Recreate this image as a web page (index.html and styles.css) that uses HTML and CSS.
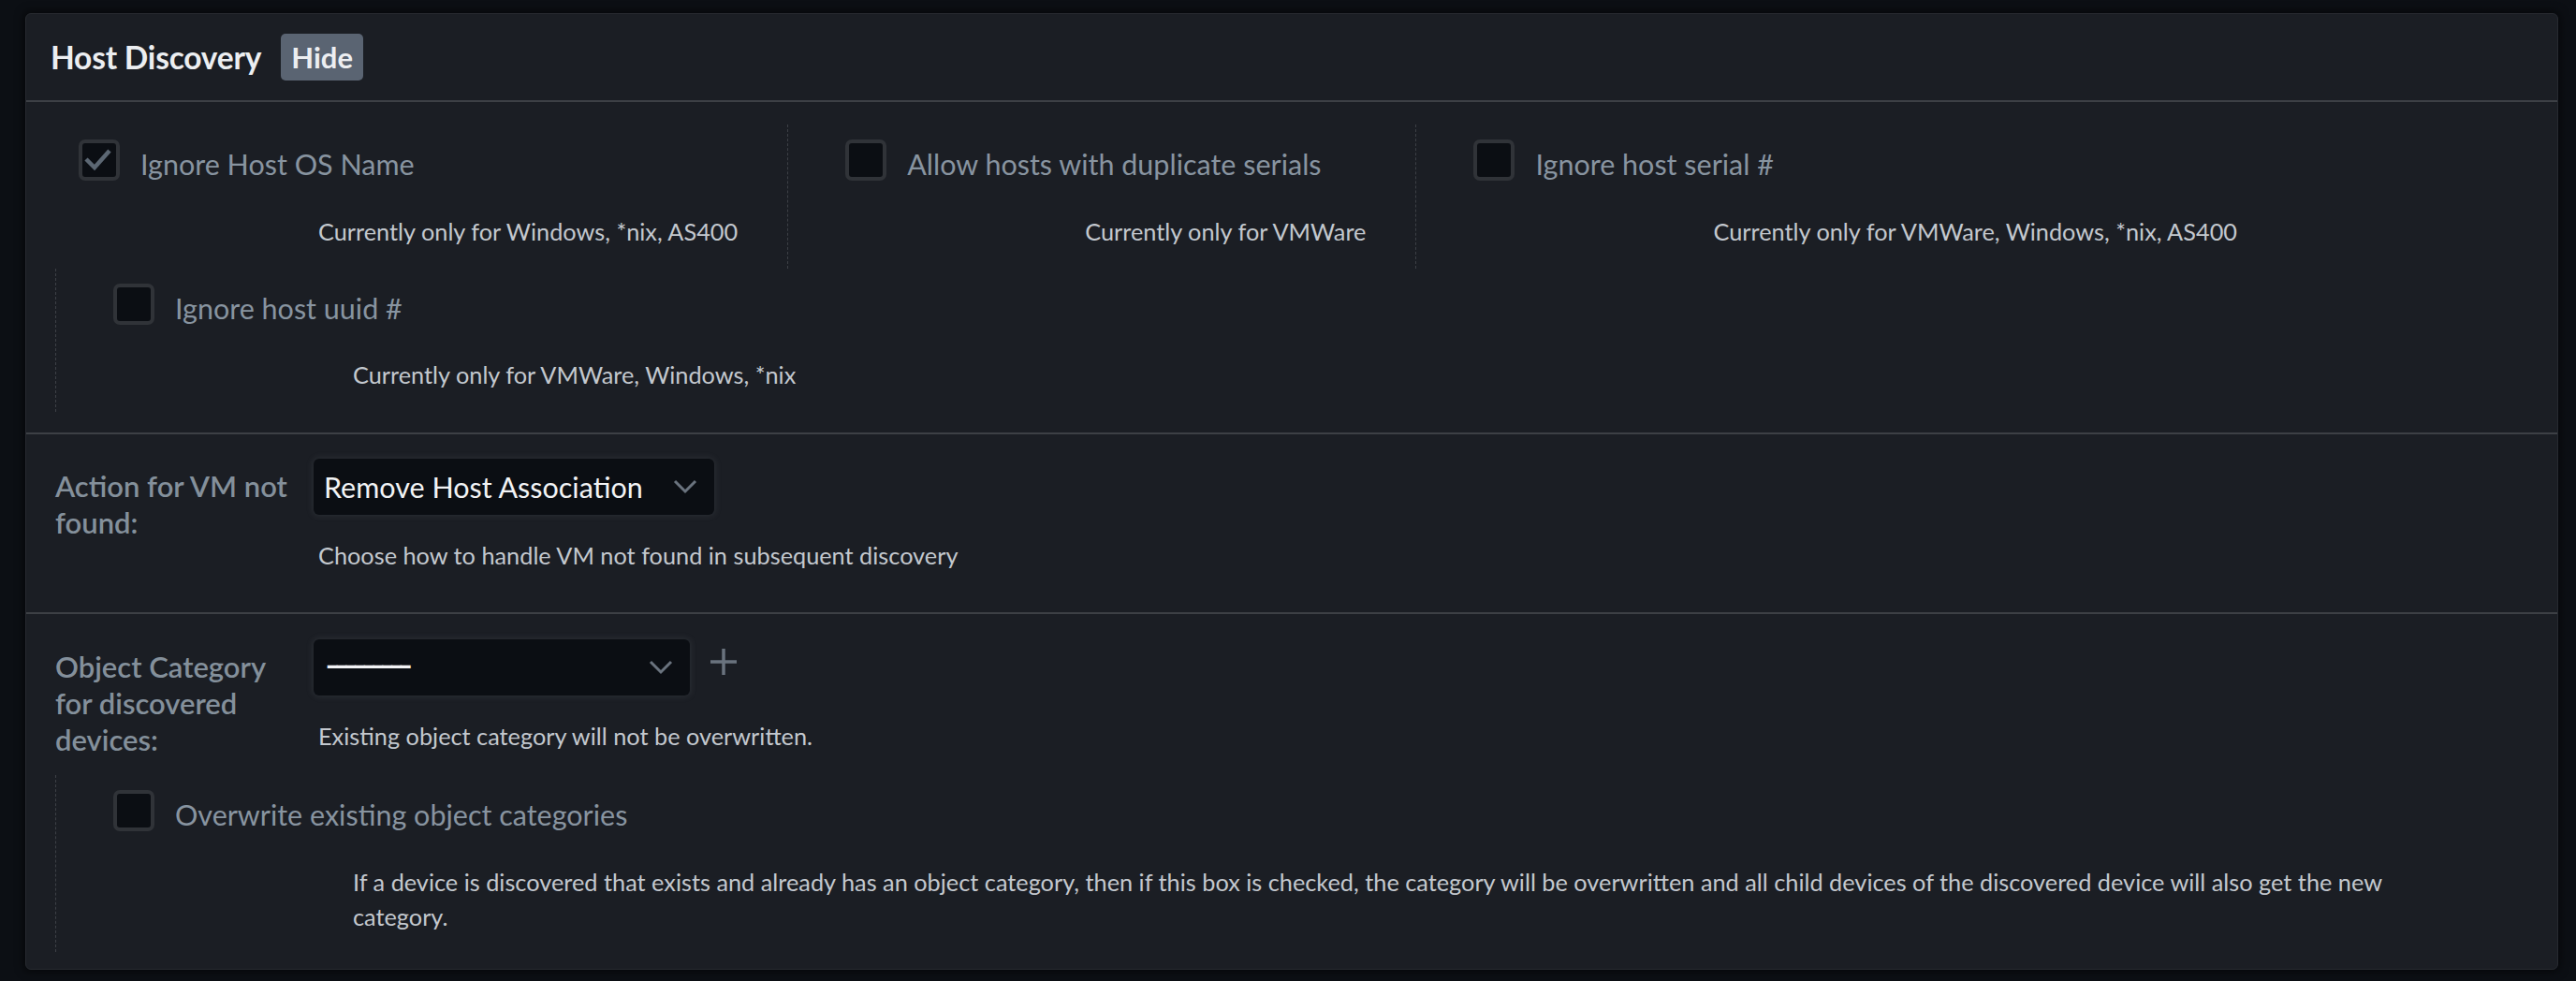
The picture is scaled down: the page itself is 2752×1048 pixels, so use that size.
FILE: index.html
```html
<!DOCTYPE html>
<html lang="en">
<head>
<meta charset="utf-8">
<title>Host Discovery</title>
<link rel="stylesheet" href="styles.css">
</head>
<body>
<div class="card">
  <div class="card-header">
    <h2 class="title">Host Discovery</h2>
    <span class="badge">Hide</span>
  </div>

  <div class="section section-checks">
    <div class="check-item first">
      <div class="check-row">
        <span class="checkbox checked">
          <svg viewBox="0 0 44 44" width="44" height="44"><polyline points="8,21 17,30 33,12" fill="none" stroke="#5c6773" stroke-width="4.5" stroke-linecap="butt" stroke-linejoin="miter"/></svg>
        </span>
        <span class="check-label">Ignore Host OS Name</span>
      </div>
      <div class="help">Currently only for Windows, *nix, AS400</div>
    </div>
    <div class="check-item">
      <div class="check-row">
        <span class="checkbox"></span>
        <span class="check-label">Allow hosts with duplicate serials</span>
      </div>
      <div class="help">Currently only for VMWare</div>
    </div>
    <div class="check-item">
      <div class="check-row">
        <span class="checkbox"></span>
        <span class="check-label">Ignore host serial #</span>
      </div>
      <div class="help">Currently only for VMWare, Windows, *nix, AS400</div>
    </div>
    <div class="check-item">
      <div class="check-row">
        <span class="checkbox"></span>
        <span class="check-label">Ignore host uuid #</span>
      </div>
      <div class="help">Currently only for VMWare, Windows, *nix</div>
    </div>
  </div>

  <div class="section section-action">
    <div class="form-row">
      <label class="form-label">Action for VM not found:</label>
      <div class="field">
        <div class="select select-action">
          <span class="select-text">Remove Host Association</span>
          <svg class="chevron" viewBox="0 0 26 16" width="26" height="16"><polyline points="2,2 13,13 24,2" fill="none" stroke="#6a737e" stroke-width="3"/></svg>
        </div>
        <div class="field-help">Choose how to handle VM not found in subsequent discovery</div>
      </div>
    </div>
  </div>

  <div class="section section-category">
    <div class="form-row">
      <label class="form-label">Object Category for discovered devices:</label>
      <div class="field">
        <div class="select-line">
          <div class="select select-category">
            <span class="select-text dashes">---------</span>
            <svg class="chevron" viewBox="0 0 26 16" width="26" height="16"><polyline points="2,2 13,13 24,2" fill="none" stroke="#6a737e" stroke-width="3"/></svg>
          </div>
          <svg class="plus" viewBox="0 0 30 30" width="30" height="30"><path d="M15 1 V29 M1 15 H29" fill="none" stroke="#6a737e" stroke-width="3.5"/></svg>
        </div>
        <div class="field-help">Existing object category will not be overwritten.</div>
      </div>
    </div>
    <div class="check-item wide">
      <div class="check-row">
        <span class="checkbox"></span>
        <span class="check-label">Overwrite existing object categories</span>
      </div>
      <div class="help">If a device is discovered that exists and already has an object category, then if this box is checked, the category will be overwritten and all child devices of the discovered device will also get the new category.</div>
    </div>
  </div>
</div>
</body>
</html>
```
FILE: styles.css
```css
* { box-sizing: border-box; }

html, body {
  margin: 0;
  padding: 0;
  background: #0c0f14;
}

body {
  padding: 14px 19px 13px 27px;
  font-family: Lato, "Open Sans", sans-serif;
}

.card {
  background: #1b1e24;
  border: 1px solid #272a30;
  border-radius: 6px;
  box-shadow: 0 0 10px 2px rgba(0, 0, 0, 0.55);
  overflow: hidden;
}

.card-header {
  height: 94px;
  display: flex;
  align-items: center;
  gap: 21px;
  padding: 0 26px;
  border-bottom: 2px solid #3d4045;
}

.title {
  margin: 0;
  font-family: Lato, sans-serif;
  font-weight: 700;
  font-size: 33.5px;
  color: #eceef1;
  letter-spacing: -0.2px;
}

.badge {
  height: 50px;
  padding: 0 11px;
  display: inline-flex;
  align-items: center;
  background: #5a6472;
  border-radius: 5px;
  color: #eceef1;
  font-weight: 700;
  font-size: 31px;
}

.section {
  border-bottom: 2px solid #3d4045;
}

.section:last-child {
  border-bottom: none;
}

.section-checks {
  display: flex;
  flex-wrap: wrap;
  padding: 24px 0 22px 31px;
}

.check-item {
  border-left: 1px dashed #3d4046;
  padding: 16px 53px 21px 61px;
}

.check-item.first {
  border-left: none;
  padding-left: 25px;
}

.check-row {
  display: flex;
  align-items: flex-start;
  gap: 22px;
}

.checkbox {
  flex: 0 0 44px;
  width: 44px;
  height: 44px;
  border: 4px solid #303338;
  border-radius: 7px;
  background: #0b0e13;
  position: relative;
}

.checkbox svg {
  position: absolute;
  left: -4px;
  top: -4px;
}

.check-label {
  padding-top: 8px;
  font-size: 30.5px;
  line-height: 1.2;
  color: #8894a0;
  white-space: nowrap;
}

.help {
  margin-top: 35px;
  margin-left: 256px;
  font-size: 25.3px;
  line-height: 37px;
  color: #c3c8ce;
  white-space: nowrap;
}

.check-item.wide {
  margin-left: 31px;
  padding-bottom: 19px;
}

.check-item.wide .help {
  white-space: normal;
  max-width: 2265px;
}

.form-row {
  display: flex;
  align-items: flex-start;
  padding-left: 31px;
}

.form-label {
  flex: 0 0 262px;
  margin-right: 14px;
  padding-top: 10px;
  font-weight: 600;
  font-size: 31px;
  line-height: 39px;
  color: #84909b;
}

.section-action {
  padding: 26px 0 42px;
}

.section-category {
  padding: 27px 0 18px;
}

.section-category .form-row {
  margin-bottom: 18px;
}

.select {
  height: 60px;
  display: flex;
  align-items: center;
  justify-content: space-between;
  padding: 0 18px 0 11px;
  background: #0b0e13;
  border-radius: 6px;
  box-shadow: 0 0 7px 1px rgba(120, 125, 135, 0.18);
}

.select-action { width: 428px; }
.select-category { width: 402px; }

.select-text {
  font-size: 30.5px;
  color: #f2f3f5;
  white-space: nowrap;
}

.select-text.dashes {
  font-size: 44px;
  line-height: 44px;
  letter-spacing: -6.6px;
  margin-left: 1px;
  position: relative;
  top: -4px;
}

.chevron {
  display: block;
}

.select-line {
  display: flex;
  align-items: flex-start;
  gap: 21px;
}

.plus {
  display: block;
  margin-top: 9px;
}

.field-help {
  margin-top: 25px;
  margin-left: 5px;
  font-size: 25.3px;
  line-height: 37px;
  color: #c3c8ce;
  white-space: nowrap;
}
```
